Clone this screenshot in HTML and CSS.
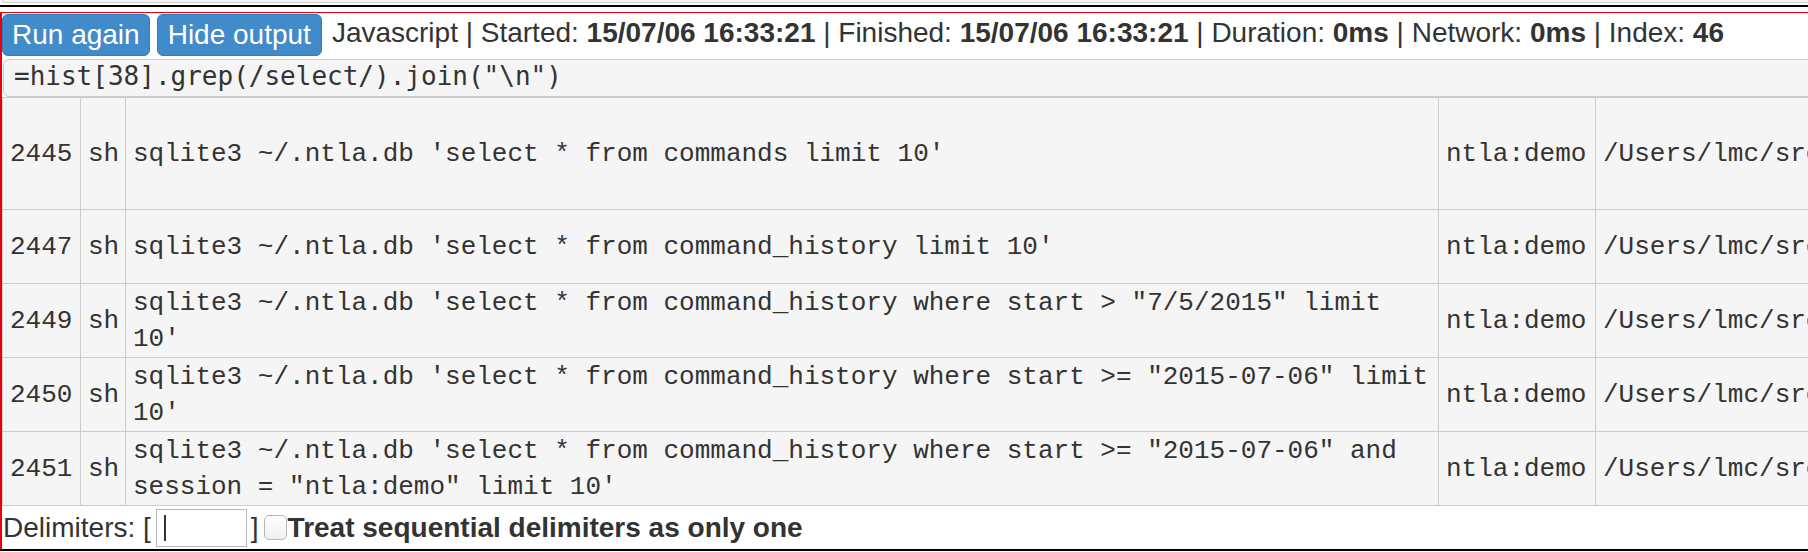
FILE: index.html
```html
<!DOCTYPE html>
<html>
<head>
<meta charset="utf-8">
<link rel="stylesheet" href="styles.css">
</head>
<body>
<div class="prev-box"></div>
<div class="cell-wrap">
  <div class="output">
    <div class="toolbar">
      <button class="btn">Run again</button>
      <button class="btn">Hide output</button>
      <span class="meta">Javascript | Started: <b>15/07/06 16:33:21</b> | Finished: <b>15/07/06 16:33:21</b> | Duration: <b>0ms</b> | Network: <b>0ms</b> | Index: <b>46</b></span>
    </div>
    <div class="code">=hist[38].grep(/select/).join("\n")</div>
    <table class="grid">
      <colgroup>
        <col class="c-id"><col class="c-sh"><col class="c-cmd"><col class="c-sess"><col class="c-path"><col class="c-rest">
      </colgroup>
      <tr class="r3"><td>2445</td><td>sh</td><td>sqlite3 ~/.ntla.db 'select * from commands limit 10'</td><td>ntla:demo</td><td class="nw">/Users/lmc/src/ntla</td><td></td></tr>
      <tr class="r2"><td>2447</td><td>sh</td><td>sqlite3 ~/.ntla.db 'select * from command_history limit 10'</td><td>ntla:demo</td><td class="nw">/Users/lmc/src/ntla</td><td></td></tr>
      <tr class="r2"><td>2449</td><td>sh</td><td>sqlite3 ~/.ntla.db 'select * from command_history where start &gt; "7/5/2015" limit 10'</td><td>ntla:demo</td><td class="nw">/Users/lmc/src/ntla</td><td></td></tr>
      <tr class="r2"><td>2450</td><td>sh</td><td>sqlite3 ~/.ntla.db 'select * from command_history where start &gt;= "2015-07-06" limit 10'</td><td>ntla:demo</td><td class="nw">/Users/lmc/src/ntla</td><td></td></tr>
      <tr class="r2"><td>2451</td><td>sh</td><td>sqlite3 ~/.ntla.db 'select * from command_history where start &gt;= "2015-07-06" and session = "ntla:demo" limit 10'</td><td>ntla:demo</td><td class="nw">/Users/lmc/src/ntla</td><td></td></tr>
    </table>
    <div class="delims">
      <span>Delimiters: [</span>
      <span class="input-wrap"><input class="delim-input" type="text"><span class="caret"></span></span>
      <span>]</span>
      <input class="chk" type="checkbox">
      <b>Treat sequential delimiters as only one</b>
    </div>
  </div>
</div>
</body>
</html>
```

FILE: styles.css
```css
html, body {
  margin: 0;
  padding: 0;
  overflow: hidden;
  background: #fff;
}
body {
  width: 1808px;
  height: 552px;
  font-family: "Liberation Sans", Arial, sans-serif;
  color: #333;
}
.prev-box {
  width: 2400px;
  margin-left: 2px;
  height: 2px;
  background: #f5f5f5;
  border: 1px solid #ccc;
  border-top: 0;
  border-radius: 0 0 5px 5px;
}
.cell-wrap {
  margin-top: 2px;
  width: 2400px;
  border-top: 2px solid #000;
  border-bottom: 2px solid #000;
  padding-top: 5px;
}
.output {
  border-top: 1px solid #e8000b;
  border-left: 2px solid #e8000b;
  width: 2398px;
}
.toolbar {
  display: flex;
  align-items: flex-start;
  padding-top: 1px;
  height: 45px;
}
.btn {
  font-family: "Liberation Sans", Arial, sans-serif;
  font-size: 28px;
  line-height: 30px;
  color: #fff;
  background: #428bca;
  border: 1px solid #357ebd;
  border-radius: 6px;
  padding: 5px 9px 5px 9px;
  margin: 0 7px 0 0;
  height: 42px;
}
.btn + .btn { padding: 5px 10px; }
.meta {
  font-size: 28px;
  line-height: 30px;
  margin-top: 4px;
  margin-left: 3px;
  white-space: nowrap;
}
.meta b { font-weight: bold; }
.code {
  margin-left: 1px;
  font-family: "DejaVu Sans Mono", monospace;
  font-size: 26px;
  line-height: 30px;
  padding: 1px 10px 5px;
  background: #f5f5f5;
  border: 1px solid #ccc;
  border-radius: 6px;
  color: #333;
}
.grid {
  border-collapse: collapse;
  table-layout: fixed;
  width: 2396px;
  background: #f5f5f5;
  font-family: "Liberation Mono", "Courier New", monospace;
  font-size: 26px;
  line-height: 36px;
  color: #333;
}
.grid td {
  border: 1px solid #ccc;
  padding: 0 7px;
  vertical-align: middle;
}
.c-id { width: 78px; }
.c-sh { width: 45px; }
.c-cmd { width: 1313px; }
.c-sess { width: 157px; }
.c-path { width: 500px; }
.r3 td { height: 111px; }
.r2 td { height: 73px; }
.nw { white-space: nowrap; }
.delims {
  display: flex;
  align-items: center;
  height: 43px;
  font-size: 28px;
  white-space: nowrap;
  padding-left: 1px;
}
.input-wrap {
  position: relative;
  display: block;
  margin: 0 4px 0 5px;
}
.delim-input {
  display: block;
  width: 91px;
  height: 38px;
  box-sizing: border-box;
  border: 1px solid #bbb;
  background: #fff;
  margin: 0;
  padding: 0;
}
.caret {
  position: absolute;
  left: 8px;
  top: 6px;
  width: 2px;
  height: 26px;
  background: #333;
}
.chk {
  appearance: none;
  -webkit-appearance: none;
  width: 23px;
  height: 25px;
  margin: 0 1px 0 5px;
  border: 1px solid #b5b5b5;
  border-radius: 5px;
  background: linear-gradient(#fff, #f0f0f0);
}
.delims b { font-weight: bold; }
```
